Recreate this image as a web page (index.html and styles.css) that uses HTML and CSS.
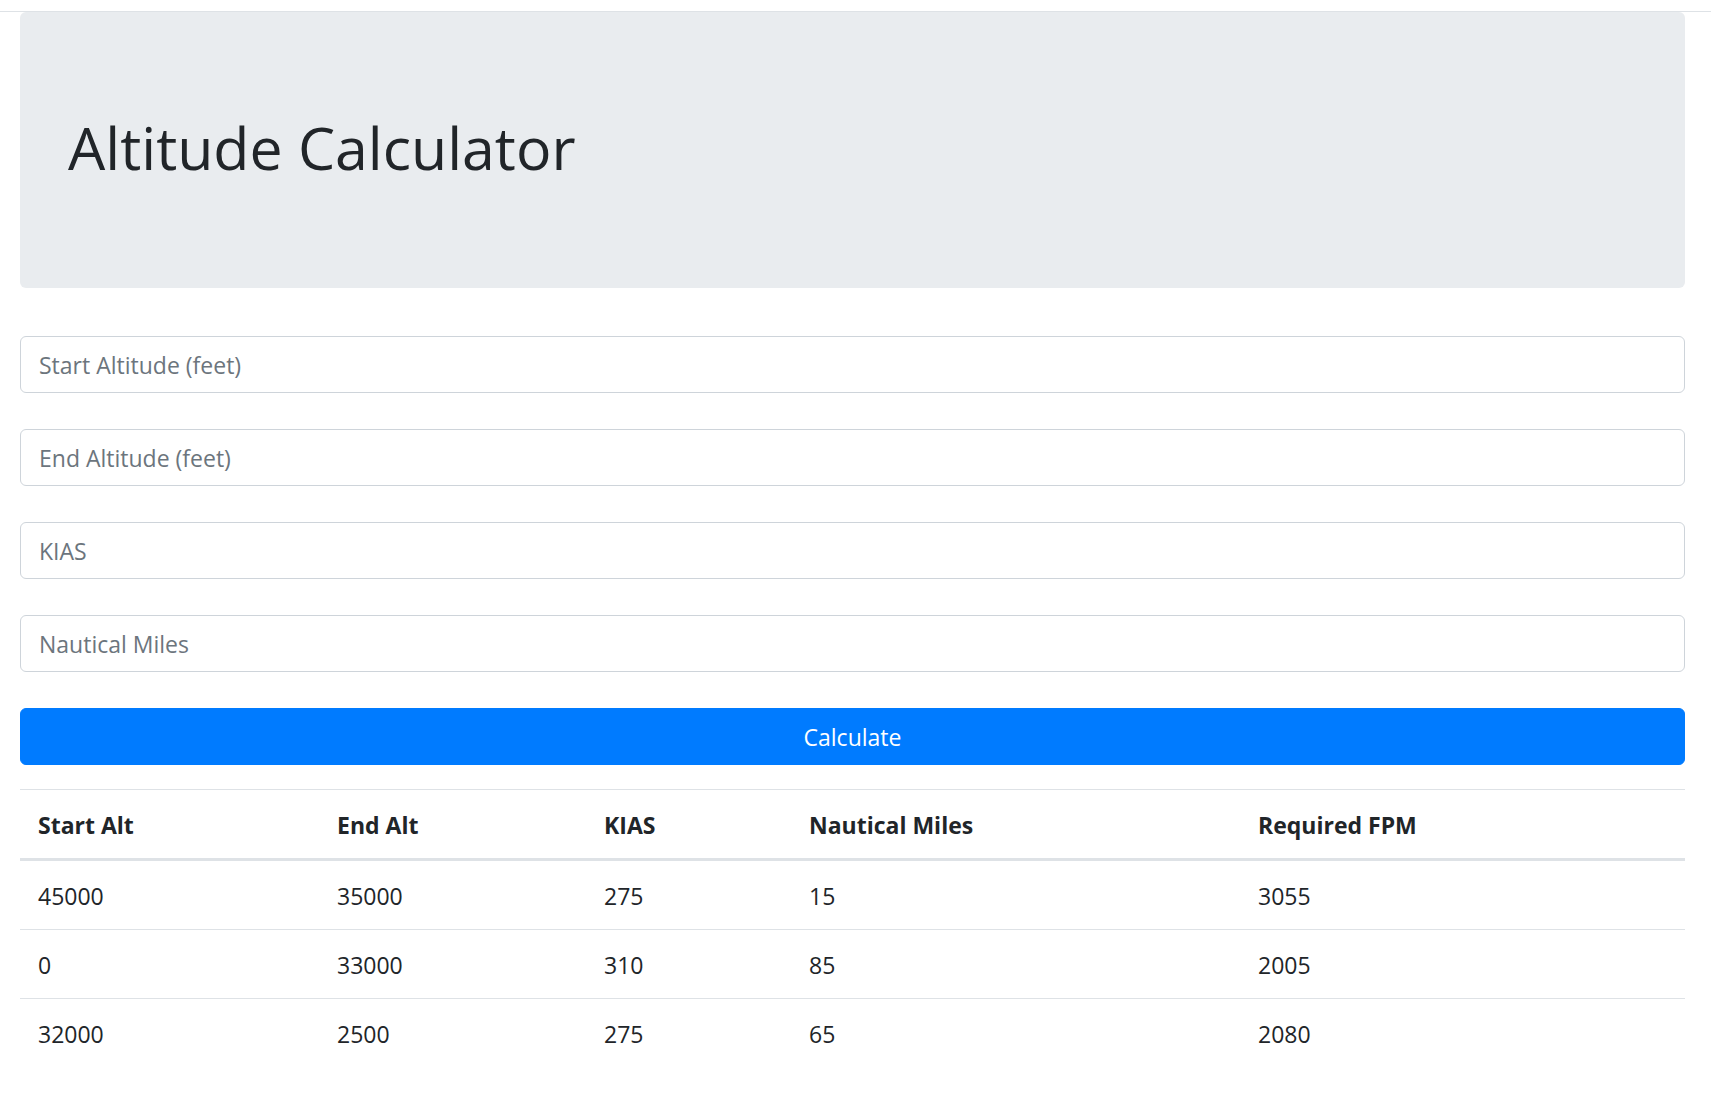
FILE: index.html
```html
<!DOCTYPE html>
<html lang="en">
<head>
<meta charset="utf-8">
<title>Altitude Calculator</title>
<link rel="stylesheet" href="styles.css">
</head>
<body>
<div class="topbar"></div>
<main class="container">
  <header class="jumbotron">
    <h1 class="title">Altitude Calculator</h1>
  </header>
  <form class="calc-form">
    <input class="field" type="text" placeholder="Start Altitude (feet)">
    <input class="field" type="text" placeholder="End Altitude (feet)">
    <input class="field" type="text" placeholder="KIAS">
    <input class="field" type="text" placeholder="Nautical Miles">
    <button class="btn-calc" type="button">Calculate</button>
  </form>
  <table class="results">
    <colgroup>
      <col class="c1"><col class="c2"><col class="c3"><col class="c4"><col class="c5">
    </colgroup>
    <thead>
      <tr><th>Start Alt</th><th>End Alt</th><th>KIAS</th><th>Nautical Miles</th><th>Required FPM</th></tr>
    </thead>
    <tbody>
      <tr><td>45000</td><td>35000</td><td>275</td><td>15</td><td>3055</td></tr>
      <tr><td>0</td><td>33000</td><td>310</td><td>85</td><td>2005</td></tr>
      <tr><td>32000</td><td>2500</td><td>275</td><td>65</td><td>2080</td></tr>
    </tbody>
  </table>
</main>
</body>
</html>
```

FILE: styles.css
```css
* { box-sizing: border-box; }

html, body {
  margin: 0;
  padding: 0;
  background: #fff;
  color: #212529;
  font-family: "Open Sans", "Noto Sans", "Liberation Sans", sans-serif;
  font-size: 23px;
  line-height: 1.5;
}

.topbar {
  height: 12px;
  border-bottom: 1px solid #dee2e6;
}

.container {
  padding: 0 26px 40px 20px;
}

.jumbotron {
  height: 276px;
  padding: 100px 48px 0;
  background: #e9ecef;
  border-radius: 6px;
  margin-bottom: 48px;
}

.title {
  margin: 0;
  font-size: 59px;
  font-weight: 400;
  line-height: 1.2;
  color: #212529;
}

.calc-form {
  display: flex;
  flex-direction: column;
  gap: 36px;
  margin: 0 0 24px;
}

.field {
  display: block;
  width: 100%;
  height: 57px;
  padding: 0 18px;
  font-family: inherit;
  font-size: 23px;
  color: #495057;
  background: #fff;
  border: 1px solid #ced4da;
  border-radius: 6px;
  outline: none;
}

.field::placeholder {
  color: #6c757d;
  opacity: 1;
}

.btn-calc {
  display: block;
  width: 100%;
  height: 57px;
  padding: 0;
  font-family: inherit;
  font-size: 23px;
  color: #fff;
  background: #007bff;
  border: 1px solid #007bff;
  border-radius: 6px;
}

.results {
  width: 100%;
  border-collapse: collapse;
  table-layout: fixed;
}

.c1 { width: 299px; }
.c2 { width: 267px; }
.c3 { width: 205px; }
.c4 { width: 449px; }
.c5 { width: 445px; }

.results th,
.results td {
  text-align: left;
  padding: 17px 18px 15px;
  line-height: 36px;
  border-top: 1px solid #dee2e6;
  vertical-align: top;
}

.results th {
  font-weight: 700;
  padding: 17px 18px 15px;
  border-bottom: 3px solid #dee2e6;
}
```
